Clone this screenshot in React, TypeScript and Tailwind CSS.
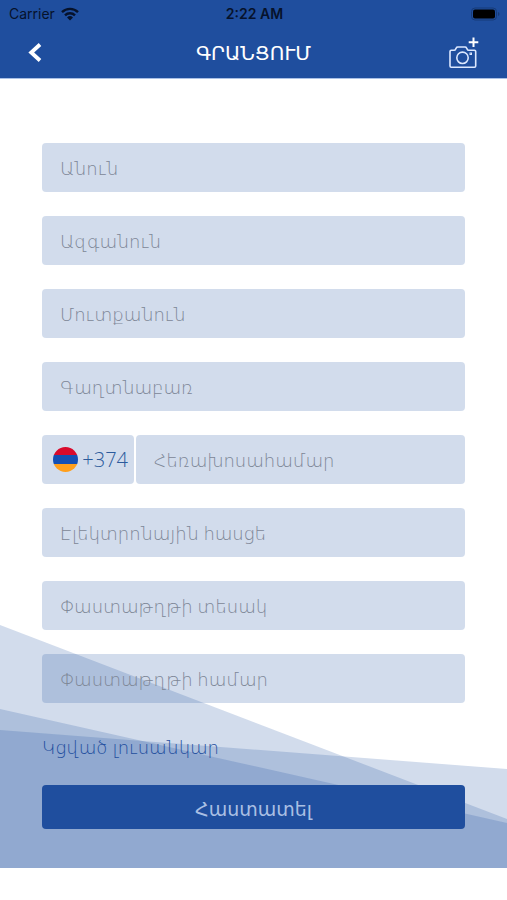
import { useState, type FormEvent } from 'react';

interface Field {
  name: string;
  label: string;
  type?: string;
}

const PERSONAL_FIELDS: Field[] = [
  { name: 'firstName', label: 'Անուն' },
  { name: 'lastName', label: 'Ազգանուն' },
  { name: 'username', label: 'Մուտքանուն' },
  { name: 'password', label: 'Գաղտնաբառ', type: 'password' },
];

const CONTACT_FIELDS: Field[] = [
  { name: 'email', label: 'Էլեկտրոնային հասցե', type: 'email' },
  { name: 'documentType', label: 'Փաստաթղթի տեսակ' },
  { name: 'documentNumber', label: 'Փաստաթղթի համար' },
];

const FIELD_CLASS =
  'h-[49px] w-full min-w-0 rounded bg-[#1f4e9e]/20 px-[18px] text-lg font-light text-gray-700 outline-none placeholder:text-[#7d8696]';

export default function App() {
  return (
    <div className="min-h-screen bg-white font-['Noto_Sans','DejaVu_Sans',sans-serif]">
      <header className="border-b border-[#a9c0e6] bg-[#1f4e9e]">
        <StatusBar />
        <TitleBar />
      </header>
      <main className="relative px-[42px] pt-16 pb-[39px]">
        <Waves />
        <RegistrationForm />
      </main>
    </div>
  );
}

function StatusBar() {
  return (
    <div className="grid h-7 grid-cols-3 items-center pr-[7px] pl-[9px] font-['Inter',sans-serif] text-sm text-[#06122b]">
      <div className="flex items-center gap-1.5">
        <span>Carrier</span>
        <svg viewBox="0 0 18 14" className="h-3.5 w-[18px]" aria-hidden="true">
          <g fill="none" stroke="currentColor" strokeWidth="2.4">
            <path d="M1 5.2a11.4 11.4 0 0 1 16 0" />
            <path d="M4 8.3a7.1 7.1 0 0 1 10 0" />
          </g>
          <path d="M9 13.6 6 10.5a4.3 4.3 0 0 1 6 0z" fill="currentColor" />
        </svg>
      </div>
      <span className="text-center font-semibold">2:22 AM</span>
      <svg viewBox="0 0 29 14" className="h-3.5 w-[29px] justify-self-end" aria-hidden="true">
        <rect x="0.5" y="1" width="25" height="12" rx="3.5" fill="none" stroke="#173b78" />
        <rect x="2" y="2.5" width="22" height="9" rx="2" fill="#000" />
        <path d="M27 5v4q1.5-.6 1.5-2T27 5z" fill="#173b78" />
      </svg>
    </div>
  );
}

function TitleBar() {
  return (
    <div className="grid h-[50px] grid-cols-[1fr_auto_1fr] items-center px-7 text-white">
      <button type="button" aria-label="Հետ" className="justify-self-start">
        <svg viewBox="0 0 14 20" className="h-5 w-3.5" aria-hidden="true">
          <path d="M12 1.5 3.2 9.5l8.8 8" fill="none" stroke="currentColor" strokeWidth="3.8" />
        </svg>
      </button>
      <h1 className="text-xl leading-6 font-medium">ԳՐԱՆՑՈՒՄ</h1>
      <button type="button" aria-label="Ավելացնել լուսանկար" className="justify-self-end">
        <svg
          viewBox="0 0 32 32"
          className="size-8"
          fill="none"
          stroke="#dce8ff"
          strokeWidth="1.6"
          aria-hidden="true"
        >
          <path d="M4.2 13.2h3q1 0 1.4-1l.7-1.3q.4-.9 1.4-.9h7.4q1 0 1.4.9l.7 1.3q.4 1 1.4 1h5.9q1.2 0 1.2 1.2V29q0 1.2-1.2 1.2H4.2Q3 30.2 3 29V14.4q0-1.2 1.2-1.2z" />
          <circle cx="15.5" cy="20.8" r="5.7" />
          <rect x="23" y="16" width="1.5" height="1.5" strokeWidth="1" />
          <path d="M26.5 .5v9.6M21.7 5.3h9.6" stroke="#fff" strokeWidth="2" />
        </svg>
      </button>
    </div>
  );
}

// Three translucent slopes that darken where they overlap
function Waves() {
  return (
    <svg
      viewBox="0 0 507 243"
      preserveAspectRatio="none"
      className="pointer-events-none absolute inset-x-0 bottom-0 h-[243px] w-full"
      fill="#1f4e9e"
      fillOpacity="0.2"
      aria-hidden="true"
    >
      <path d="M0 0 507 194v49H0z" />
      <path d="M0 84 507 198v45H0z" />
      <path d="M0 105 507 144v99H0z" />
    </svg>
  );
}

function TextField({ name, label, type = 'text' }: Field) {
  return (
    <input name={name} type={type} placeholder={label} aria-label={label} className={FIELD_CLASS} />
  );
}

function RegistrationForm() {
  const [sent, setSent] = useState(false);

  const onSubmit = (e: FormEvent) => {
    e.preventDefault();
    setSent(true);
  };

  return (
    <form onSubmit={onSubmit} className="relative flex flex-col">
      <div className="flex flex-col gap-6">
        {PERSONAL_FIELDS.map((field) => (
          <TextField key={field.name} {...field} />
        ))}
        <div className="flex gap-0.5">
          <button
            type="button"
            className="flex h-[49px] w-[92px] shrink-0 items-center justify-end gap-1 rounded bg-[#1f4e9e]/20 pr-1.5 font-['Open_Sans',sans-serif] text-xl font-light text-[#2c5b9c]"
          >
            <ArmenianFlag />
            <span>+374</span>
          </button>
          <TextField name="phone" label="Հեռախոսահամար" type="tel" />
        </div>
        {CONTACT_FIELDS.map((field) => (
          <TextField key={field.name} {...field} />
        ))}
      </div>
      <a href="#photo" className="mt-[30px] self-start text-lg font-light text-[#1f4e9e]">
        Կցված լուսանկար
      </a>
      <button
        type="submit"
        disabled={sent}
        className="mt-6 h-11 rounded bg-[#1f4e9e] pt-1 text-[19px] font-medium text-[#a9bfe3]"
      >
        Հաստատել
      </button>
    </form>
  );
}

function ArmenianFlag() {
  return (
    <span className="flex size-[25px] flex-col overflow-hidden rounded-full" aria-hidden="true">
      <span className="flex-1 bg-[#d90a2c]" />
      <span className="flex-1 bg-[#1450b4]" />
      <span className="flex-1 bg-[#ff9f1c]" />
    </span>
  );
}
